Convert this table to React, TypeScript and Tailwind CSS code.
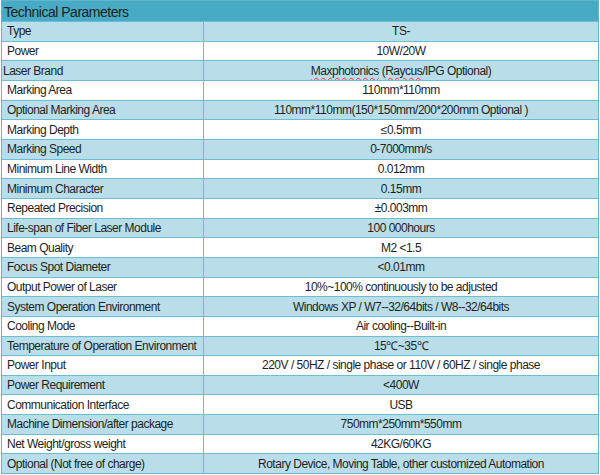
const wavy = 'underline decoration-wavy decoration-red-500 decoration-1 underline-offset-2';

const rows: [string, React.ReactNode][] = [
  ['Type', 'TS-'],
  ['Power', '10W/20W'],
  [
    'Laser Brand',
    <>
      <span className={wavy}>Maxphotonics</span>
      {' ('}
      <span className={wavy}>Raycus</span>
      {'/IPG Optional)'}
    </>,
  ],
  ['Marking Area', '110mm*110mm'],
  ['Optional Marking Area', '110mm*110mm(150*150mm/200*200mm Optional )'],
  ['Marking Depth', '≤0.5mm'],
  ['Marking Speed', '0-7000mm/s'],
  ['Minimum Line Width', '0.012mm'],
  ['Minimum Character', '0.15mm'],
  ['Repeated Precision', '±0.003mm'],
  ['Life-span of Fiber Laser Module', '100 000hours'],
  ['Beam Quality', 'M2 <1.5'],
  ['Focus Spot Diameter', '<0.01mm'],
  ['Output Power of Laser', '10%~100% continuously to be adjusted'],
  ['System Operation Environment', 'Windows XP / W7--32/64bits / W8--32/64bits'],
  ['Cooling Mode', 'Air cooling--Built-in'],
  ['Temperature of Operation Environment', '15℃~35℃'],
  ['Power Input', '220V / 50HZ / single phase or 110V / 60HZ / single phase'],
  ['Power Requirement', '<400W'],
  ['Communication Interface', 'USB'],
  ['Machine Dimension/after package', '750mm*250mm*550mm'],
  ['Net Weight/gross weight', '42KG/60KG'],
  ['Optional (Not free of charge)', 'Rotary Device, Moving Table, other customized Automation'],
];

export default function App() {
  return (
    <div className="w-[600px] h-[475px] bg-white font-['Liberation_Sans',Arial,sans-serif] text-[#1e1e1e]">
      <div className="flex flex-col h-[474px] border border-[#5fb6cd] mx-[1px]">
        <div className="h-[20px] bg-[#47abc6] flex items-center pl-[2px] pt-[1px] text-[14px] tracking-[-0.5px] leading-none shrink-0">
          Technical Parameters
        </div>
        {rows.map(([label, value], i) => (
          <div
            key={label}
            className={`flex flex-1 border-t border-[#6abdd3] text-[12px] tracking-[-0.5px] leading-none whitespace-nowrap ${
              i % 2 === 0 ? 'bg-[#b9dee9]' : 'bg-white'
            }`}
          >
            <div
              className={`w-[202px] shrink-0 flex items-center border-r border-[#6abdd3] ${
                label === 'Laser Brand' ? 'pl-[1px]' : 'pl-[5px]'
              }`}
            >
              {label}
            </div>
            <div className="flex-1 flex items-center justify-center">
              <span>{value}</span>
            </div>
          </div>
        ))}
      </div>
    </div>
  );
}
